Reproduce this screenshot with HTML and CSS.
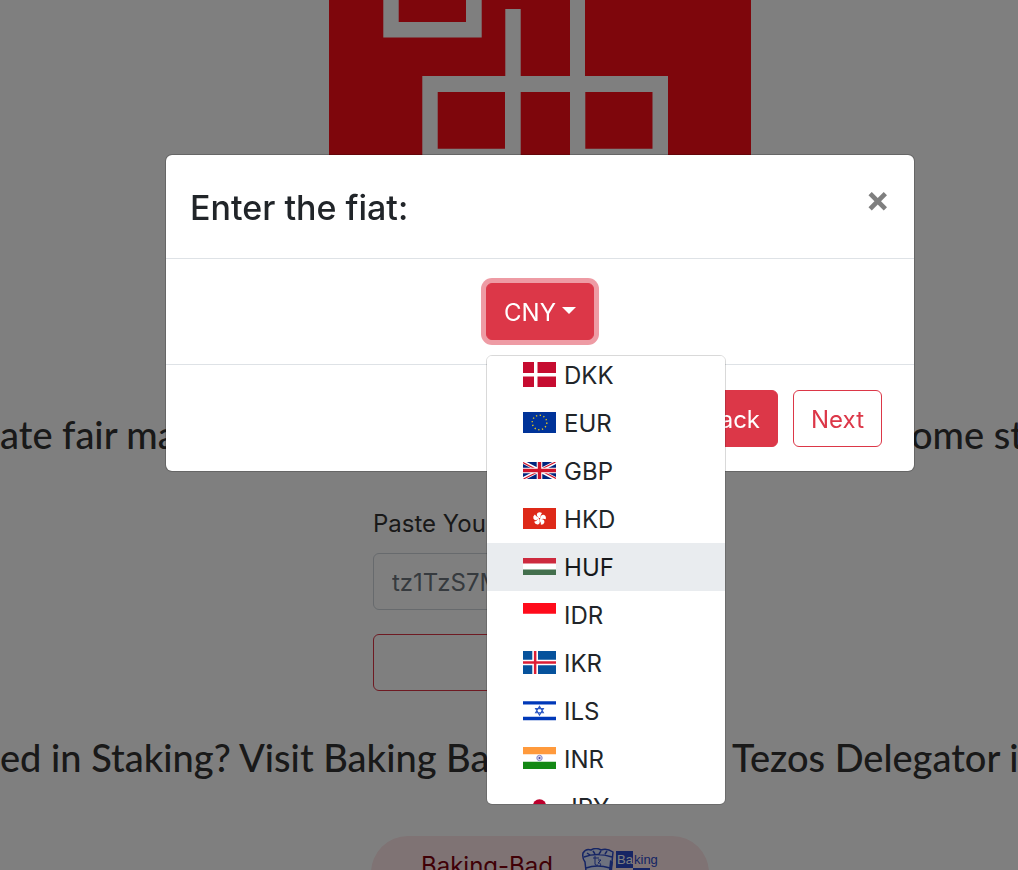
FILE: index.html
```html
<!DOCTYPE html>
<html lang="en">
<head>
<meta charset="utf-8">
<meta name="viewport" content="width=device-width, initial-scale=1">
<title>Enter the fiat</title>
<link rel="stylesheet" href="styles.css">
</head>
<body>
<main class="page">
  <svg class="logo" viewBox="0 0 422 360" aria-hidden="true">
    <rect width="422" height="360" fill="#fc0d18"/>
    <path fill="#fff" d="M54.300 0H69.700V22H137V0H152.700V37.500H54.300zM93.300 76H176.300V9H191.700V76H241V0H256V76H339V164H241V92H191.700V164H93.300zM108.700 92V148.700H176V92zM256.300 92V148.700H323.500V92z"/>
  </svg>
  <h2 class="headline headline-fair"><span>ate fair ma</span><span>ome st</span></h2>
  <form class="wallet">
    <label class="wallet-label" for="address">Paste Your</label>
    <input class="wallet-input" id="address" type="text" placeholder="tz1TzS7M">
    <button class="wallet-button" type="button" aria-label="Submit"></button>
  </form>
  <h2 class="headline headline-staking"><span>ed in Staking? Visit Baking Ba</span><span>Tezos Delegator in</span></h2>
  <a class="baker" href="#baker">
    <span>Baking-Bad</span>
    <svg class="baker-logo" viewBox="0 0 78 50" aria-hidden="true">
      <path d="M2 5Q5 0 10 2Q15-1 20 2Q26 0 32 4L31 14L28 32H6L4 14Q1 10 2 5z" fill="#dce4ff" stroke="#2c4ac8" stroke-width="1.500"/>
      <path d="M3 9Q16 4 31 9M6 5l3 2M12 3l2 3M20 3l-2 3M26 3l-2 3M5 20Q16 16 29 20M6 23h9v5H7zM19 23h9l-1 5h-8z" fill="none" stroke="#2c4ac8" stroke-width="1.500"/>
      <path d="M14 8v8q0 2 3 1M12 10h6M17 12h3l-3 3q4 0 2 3" fill="none" stroke="#2c4ac8"/>
      <path d="M29 12l3 2-2 18h-3z" fill="#2c4ac8"/>
      <rect x="35" y="3" width="17" height="17" fill="#2c4ac8"/>
      <rect x="52" y="20" width="17" height="17" fill="#2c4ac8"/>
      <text class="baker-mark" x="36" y="16" fill="#fff">Ba</text>
      <text class="baker-mark" x="53" y="16" fill="#2c4ac8">king</text>
      <text class="baker-mark" x="53" y="33" fill="#fff">Ba</text>
      <text class="baker-mark" x="70" y="33" fill="#2c4ac8">d</text>
    </svg>
  </a>
</main>

<div class="backdrop">
  <section class="modal" role="dialog" aria-modal="true" aria-labelledby="modal-title">
    <header class="modal-header">
      <h1 class="modal-title" id="modal-title">Enter the fiat:</h1>
      <button class="close" type="button" aria-label="Close">×</button>
    </header>
    <div class="modal-body">
      <div class="dropdown">
        <button class="btn btn-solid btn-focus" type="button" aria-haspopup="true" aria-expanded="true">CNY<span class="caret"></span></button>
        <div class="menu" id="menu">
          <button class="item" type="button">
            <svg class="flag" width="33" height="25" viewBox="0 0 33 25"><path fill="#c60c30" d="M0 0h33v25H0z"/><path fill="#fff" d="M11 0h3.500v25H11zM0 11h33v3.500H0z"/></svg>DKK</button>
          <button class="item" type="button">
            <svg class="flag" width="33" height="21" viewBox="0 0 33 21"><path fill="#039" d="M0 0h33v21H0z"/><circle cx="16.500" cy="10.500" r="7.300" fill="none" stroke="#e8c818" stroke-width="1.400" stroke-dasharray="1.300 2.522"/></svg>EUR</button>
          <button class="item" type="button">
            <svg class="flag" width="33" height="17" viewBox="0 0 33 17"><path fill="#00247d" d="M0 0h33v17H0z"/><path stroke="#fff" stroke-width="3.400" d="M0 0l33 17M33 0L0 17"/><path stroke="#cf142b" stroke-width="1.200" d="M0 .6l16.500 8.500M33 16.400L16.500 8M32.500 0l-16 8M.5 17l16-8"/><path fill="#fff" d="M13.700 0h5.600v17h-5.600zM0 5.700h33v5.600H0z"/><path fill="#cf142b" d="M14.800 0h3.400v17h-3.400zM0 6.800h33v3.400H0z"/></svg>GBP</button>
          <button class="item" type="button">
            <svg class="flag" width="33" height="21" viewBox="0 0 33 21"><path fill="#de2918" d="M0 0h33v21H0z"/><g fill="#fff"><path id="petal" d="M16.200 10Q12.500 7.500 14.500 5Q16.500 3.300 19 5Q17.500 6.500 17.200 10z"/><use href="#petal" transform="rotate(72 16.500 10.700)"/><use href="#petal" transform="rotate(144 16.500 10.700)"/><use href="#petal" transform="rotate(216 16.500 10.700)"/><use href="#petal" transform="rotate(288 16.500 10.700)"/></g></svg>HKD</button>
          <button class="item item-active" type="button">
            <svg class="flag" width="33" height="17" viewBox="0 0 33 17"><path fill="#fff" d="M0 0h33v17H0z"/><path fill="#cd2a3e" d="M0 0h33v5.500H0z"/><path fill="#436f4d" d="M0 11.400h33V17H0z"/></svg>HUF</button>
          <button class="item" type="button">
            <svg class="flag" width="33" height="23" viewBox="0 0 33 23"><path fill="#fff" d="M0 0h33v23H0z"/><path fill="#ff0b1b" d="M0 0h33v10.700H0z"/></svg>IDR</button>
          <button class="item" type="button">
            <svg class="flag" width="33" height="23" viewBox="0 0 33 23"><path fill="#06529c" d="M0 0h33v23H0z"/><path fill="#fff" d="M9.300 0H15v23H9.300zM0 8.800h33v5.400H0z"/><path fill="#dc1e35" d="M10.900 0h2.500v23h-2.500zM0 10.300h33v2.400H0z"/></svg>IKR</button>
          <button class="item" type="button">
            <svg class="flag" width="33" height="23" viewBox="0 0 33 23"><path fill="#fff" d="M0 0h33v23H0z"/><path fill="#0038b8" d="M0 2.200h33v3.400H0zM0 17.800h33v3.400H0z"/><path fill="none" stroke="#2c58c4" stroke-width="1.100" d="M16.500 7.300l3.900 6.500h-7.800zM16.500 16.100l3.900-6.500h-7.800z"/></svg>ILS</button>
          <button class="item" type="button">
            <svg class="flag" width="33" height="22" viewBox="0 0 33 22"><path fill="#fff" d="M0 0h33v22H0z"/><path fill="#ff9a3c" d="M0 0h33v7.300H0z"/><path fill="#138814" d="M0 14.700h33V22H0z"/><circle cx="16.500" cy="11" r="2.700" fill="#d4d4ee" stroke="#8888c8"/><circle cx="16.500" cy="11" r="1" fill="#4444a0"/></svg>INR</button>
          <button class="item" type="button">
            <svg class="flag" width="33" height="22" viewBox="0 0 33 22"><path fill="#fff" d="M0 0h33v22H0z"/><circle cx="16.500" cy="11" r="6.800" fill="#bc002d"/></svg>JPY</button>
        </div>
      </div>
    </div>
    <footer class="modal-footer">
      <button class="btn btn-solid" type="button">Back</button>
      <button class="btn btn-outline" type="button">Next</button>
    </footer>
  </section>
</div>
<script src="menu.js"></script>
</body>
</html>
```
FILE: styles.css
```css
* {
  box-sizing: border-box;
}

body {
  margin: 0;
  height: 100vh;
  overflow: hidden;
  background: #fff;
  color: #212529;
  font-family: Inter, "Liberation Sans", sans-serif;
  font-size: 24px;
  line-height: 36px;
}

button,
input {
  font: inherit;
}

.page {
  display: flex;
  flex-direction: column;
  align-items: center;
  --shift: 62px;
}

.logo {
  display: block;
  width: 422px;
  margin-left: var(--shift);
}

.headline {
  display: grid;
  width: 100%;
  margin: 0;
  color: #333;
  font-family: Lato, sans-serif;
  font-size: 38px;
  font-weight: 500;
  line-height: 44px;
  white-space: nowrap;
}

.headline-fair {
  grid-template-columns: 1fr 107px;
  margin-top: 52px;
}

.headline-staking {
  grid-template-columns: 1fr 286px;
  margin-top: 44px;
}

.wallet {
  display: flex;
  flex-direction: column;
  width: 334px;
  margin-top: 50px;
  margin-left: var(--shift);
}

.wallet-label {
  color: #333;
}

.wallet-input {
  width: 100%;
  height: 57px;
  margin-top: 11px;
  padding: 2px 18px 0;
  border: 1px solid #ced4da;
  border-radius: 6px;
  background: #fff;
}

.wallet-input::placeholder {
  color: #6c757d;
  opacity: 1;
}

.wallet-button {
  height: 57px;
  margin-top: 24px;
  border: 1px solid #dc3545;
  border-radius: 6px;
  background: transparent;
}

.baker {
  display: flex;
  justify-content: center;
  gap: 28px;
  width: 338px;
  margin-top: 57px;
  margin-left: var(--shift);
  padding: 12px 0;
  border-radius: 48px;
  background: #ffe6e8;
  color: #80000c;
  text-decoration: none;
}

.baker-logo {
  width: 78px;
  height: 50px;
}

.baker-mark {
  font: 13px "Liberation Sans", sans-serif;
}

.backdrop {
  position: fixed;
  inset: 0;
  display: flex;
  justify-content: center;
  align-items: flex-start;
  padding: 154px 0 0 62px;
  background: rgba(0, 0, 0, 0.5);
}

.modal {
  width: 750px;
  border: 1px solid rgba(0, 0, 0, 0.2);
  border-radius: 7px;
  background: #fff;
  background-clip: padding-box;
}

.modal-header {
  display: flex;
  justify-content: space-between;
  align-items: flex-start;
  padding: 24px;
  border-bottom: 1px solid #dee2e6;
}

.modal-title {
  margin: 0;
  padding-top: 3px;
  font-size: 34px;
  font-weight: 500;
  line-height: 52px;
}

.close {
  padding: 0;
  border: 0;
  background: transparent;
  color: #7f7f7f;
  font-size: 36px;
  font-weight: 700;
  line-height: 40px;
}

.modal-body {
  display: flex;
  justify-content: center;
  padding: 24px;
}

.dropdown {
  position: relative;
}

.btn {
  display: flex;
  align-items: center;
  height: 57px;
  padding: 2px 17px 0;
  border: 1px solid #dc3748;
  border-radius: 6px;
}

.btn-solid {
  background: #dc3748;
  color: #fff;
}

.btn-outline {
  background: transparent;
  color: #dc3748;
}

.btn-focus {
  box-shadow: 0 0 0 5px #ee9ba4;
}

.caret {
  margin: 0 0 4px 6px;
  border-top: 7px solid #fff;
  border-right: 7px solid transparent;
  border-left: 7px solid transparent;
}

.menu {
  position: absolute;
  top: 72px;
  left: 0;
  width: 240px;
  max-height: 450px;
  overflow-y: auto;
  scrollbar-width: none;
  border: 1px solid rgba(0, 0, 0, 0.15);
  border-radius: 6px;
  background: #fff;
  background-clip: padding-box;
}

.item {
  display: flex;
  align-items: center;
  gap: 8px;
  width: 100%;
  height: 48px;
  padding: 2px 36px 0;
  border: 0;
  background: transparent;
  color: #212529;
}

.item-active {
  background: #e9ecef;
  color: #16181b;
}

.flag {
  flex: none;
  margin-bottom: 4px;
}

.modal-footer {
  display: flex;
  justify-content: flex-end;
  gap: 15px;
  padding: 25px 32px 24px;
  border-top: 1px solid #dee2e6;
}
```
FILE: menu.js
```js
// Open the currency list part-way through its first row.
document.getElementById("menu").scrollTop = 5;
```
